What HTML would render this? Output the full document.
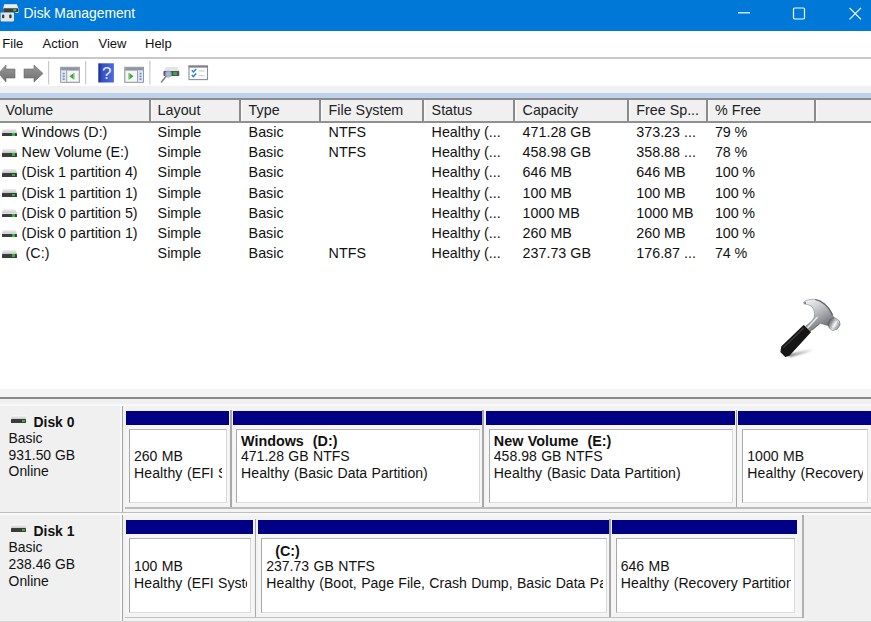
<!DOCTYPE html>
<html><head><meta charset="utf-8"><title>Disk Management</title>
<style>
html,body{margin:0;padding:0;}
body{width:871px;height:622px;overflow:hidden;background:#fff;position:relative;font-family:"Liberation Sans",Arial,sans-serif;color:#111;}
.abs{position:absolute;}
#title{left:0;top:0;width:871px;height:31px;background:#0078d7;}
#title .t{position:absolute;left:23.600px;top:4.900px;font-size:13.850px;color:#fff;line-height:16px;white-space:nowrap;}
#menu{left:0;top:31px;width:871px;height:26px;background:#fff;}
#menu span{position:absolute;top:5px;font-size:13px;line-height:16px;color:#111;}
#menuline{left:0;top:57.300px;width:871px;height:1.5px;background:#c8c8c8;}
#tool{left:0;top:59px;width:871px;height:26.500px;background:#fff;}
#gap1{left:0;top:85.500px;width:871px;height:8px;background:#f0f0f0;}
#gap2{left:0;top:93px;width:871px;height:5px;background:#bcd2ec;}
#hdr{left:0;top:97.600px;width:871px;height:25.200px;background:#f0f0f0;border-top:2px solid #8c8c8c;border-bottom:2px solid #909090;box-sizing:border-box;}
#hdr span{position:absolute;top:2.300px;margin-left:.6px;font-size:14.3px;line-height:17px;color:#222;white-space:nowrap;}
#hdr i{position:absolute;top:0;width:2px;height:21.500px;background:#8a8a8a;box-shadow:1.500px 0 0 #f8f8f8;}
.row{position:absolute;left:0;width:871px;height:20px;font-size:14.3px;line-height:20px;color:#111;white-space:nowrap;}
.row .pc{letter-spacing:-.1px;word-spacing:-.1px;}
.row span{position:absolute;top:-.6px;margin-left:.6px;}
.dk{position:absolute;left:1.800px;top:10.300px;width:15.200px;height:3.700px;background:#3c3c3c;border-radius:.6px;}
.dk:before{content:"";position:absolute;left:0;top:-4.300px;width:100%;height:4.300px;background:linear-gradient(#f0f0f0,#c2c2c2);clip-path:polygon(8% 0,92% 0,100% 100%,0 100%);}
.dk:after{content:"";position:absolute;left:10.200px;top:.5px;width:2.800px;height:2.600px;background:#2fc02f;border-radius:.5px;}
#split{left:0;top:389px;width:871px;height:8px;background:#f4f4f4;}
#splitline{left:0;top:396.800px;width:871px;height:2.200px;background:#8a8a8a;}
#bottom{left:0;top:398.5px;width:871px;height:224px;background:#f0f0f0;}

.dl{position:absolute;width:120px;font-size:13.900px;line-height:16.600px;color:#111;white-space:nowrap;}
.dl span{margin-left:8.600px;}
.dl b{margin-left:33.500px;position:relative;top:.3px;}
.dk2{position:absolute;left:11.100px;top:5.500px;width:15.400px;height:3.600px;background:#3c3c3c;border-radius:.6px;}
.dk2:before{content:"";position:absolute;left:0;top:-4.600px;width:100%;height:4.600px;background:linear-gradient(#fdfdfd,#cacaca);clip-path:polygon(7% 0,93% 0,100% 100%,0 100%);}
.dk2:after{content:"";position:absolute;left:10.600px;top:.5px;width:2.900px;height:2.600px;background:#2fc02f;border-radius:.5px;}
.part{position:absolute;background:#f6f6f6;font-size:14.050px;line-height:16.550px;color:#111;white-space:nowrap;overflow:hidden;}
.part .in{position:absolute;left:3.300px;right:1.900px;box-sizing:border-box;background:#fff;border-left:1.700px solid #a8a8a8;border-top:1.500px solid #b4b4b4;border-right:1px solid #d8d8d8;border-bottom:1px solid #dcdcdc;overflow:hidden;}
.part .tx{position:absolute;left:4px;top:2.300px;right:3.400px;overflow:hidden;word-spacing:.5px;}
.part .tx b{font-size:14.350px;position:relative;top:1.100px;}
.part .tx i.c{display:inline-block;width:9px;}
.part .tx i.g{display:inline-block;width:3.500px;}
.part .tx .h{letter-spacing:.12px;word-spacing:.6px;}
.bar{position:absolute;background:#000084;}
.vsep{position:absolute;width:1.900px;background:#a8a8a8;}
</style></head><body>
<div id="title" class="abs">
<svg class="abs" style="left:0;top:0" width="22" height="31" viewBox="0 0 22 31"><defs><linearGradient id="ig" x1="0" y1="0" x2="0" y2="1"><stop offset="0" stop-color="#f4f4f4"/><stop offset="1" stop-color="#d4d4d4"/></linearGradient></defs><path d="M4.200 4.300h12.600l1.700 4.200v4.600h-3v-1H3.200V8.300z" fill="url(#ig)"/><rect x="3.300" y="8.300" width="14.800" height="3.700" rx=".6" fill="#3c3c3c"/><rect x="13.200" y="9" width="3" height="2.200" rx=".5" fill="#2fc02f"/><rect x=".6" y="12.400" width="13.400" height="9" rx=".8" fill="#e4e4e4"/><rect x="2" y="14.500" width="2.300" height="3.800" rx="1" fill="#3a3a3a"/><rect x="9.200" y="14.500" width="2.400" height="3.800" rx="1" fill="#3a3a3a"/></svg>
<div class="t">Disk Management</div>
<svg class="abs" style="left:730px;top:0" width="141" height="31" viewBox="0 0 141 31"><g stroke="#fff" stroke-width="1.2" fill="none"><path d="M8 12.8h12"/><rect x="63.5" y="8" width="11" height="11" rx="1.2"/><path d="M119.5 7.8l11.5 11.5M131 7.8l-11.5 11.5"/></g></svg>
</div>
<div id="menu" class="abs"><span style="left:2.300px">File</span><span style="left:42.500px">Action</span><span style="left:98.500px">View</span><span style="left:145px">Help</span></div>
<div id="menuline" class="abs"></div>
<div id="tool" class="abs">
<svg class="abs" style="left:0;top:0" width="220" height="27" viewBox="0 59 220 27">
<defs><linearGradient id="hb" x1="0" y1="0" x2="1" y2="0"><stop offset="0" stop-color="#1a2c8c"/><stop offset=".25" stop-color="#3550c4"/><stop offset="1" stop-color="#4a6ce0"/></linearGradient>
<linearGradient id="ar" x1="0" y1="0" x2="0" y2="1"><stop offset="0" stop-color="#9a9a9a"/><stop offset="1" stop-color="#6e6e6e"/></linearGradient></defs>
<path d="M-1.500 73.400l7.500-8.400v4h9v9H6v4z" fill="url(#ar)" stroke="#6a6a6a" stroke-width=".6"/>
<path d="M43 73.400l-9-8.400v4H24v9h10v4z" fill="url(#ar)" stroke="#6a6a6a" stroke-width=".6"/>
<rect x="48.200" y="61" width="1" height="23.500" fill="#bdbdbd"/>
<rect x="85.200" y="61" width="1" height="23.500" fill="#bdbdbd"/>
<rect x="149.400" y="61" width="1" height="23.500" fill="#bdbdbd"/>
<g transform="translate(0 .8)"><rect x="60.700" y="66.500" width="18.600" height="15" fill="#f6f6f6" stroke="#8a8e94"/><rect x="61.200" y="67" width="17.600" height="2.800" fill="#8c96a4"/><rect x="61.200" y="69.800" width="5" height="11.200" fill="#dfe6f2"/><rect x="66.200" y="69.800" width="1" height="11.200" fill="#9a9ea4"/><path d="M69.500 75.500l4.200-3.200v6.400z" fill="#3aa83a"/><rect x="73.500" y="72.200" width="1" height="6.500" fill="#7cc87c"/><rect x="62.700" y="72" width="2" height="1.600" fill="#6a8fd0"/><rect x="62.700" y="74.800" width="2" height="1.600" fill="#6a8fd0"/><rect x="62.700" y="77.600" width="2" height="1.600" fill="#6a8fd0"/></g>
<g><rect x="98.300" y="63.300" width="15.600" height="19.200" fill="url(#hb)"/><text x="106.800" y="79" font-family="Liberation Sans, sans-serif" font-size="17" fill="#e8ecff" text-anchor="middle">?</text></g>
<g transform="translate(0 .8)"><rect x="124.800" y="66.500" width="18.600" height="15" fill="#f6f6f6" stroke="#8a8e94"/><rect x="125.300" y="67" width="17.600" height="2.800" fill="#8c96a4"/><rect x="138" y="69.800" width="5" height="11.200" fill="#dfe6f2"/><rect x="137" y="69.800" width="1" height="11.200" fill="#9a9ea4"/><path d="M133.500 75.500l-4.200-3.200v6.400z" fill="#3aa83a"/><rect x="128.300" y="72.200" width="1" height="6.500" fill="#7cc87c"/><rect x="139.500" y="72" width="2" height="1.600" fill="#6a8fd0"/><rect x="139.500" y="74.800" width="2" height="1.600" fill="#6a8fd0"/><rect x="139.500" y="77.600" width="2" height="1.600" fill="#6a8fd0"/></g>
<g><path d="M163.500 71.200l2.200-4.200h11.600l2 4.200z" fill="#e2e4e6"/><rect x="163.500" y="71" width="15.800" height="5" rx=".8" fill="#505458"/><rect x="173.300" y="72.100" width="3.600" height="2.800" fill="#2fb82f"/><circle cx="168.300" cy="74.100" r="3.100" fill="#b4d0ee" fill-opacity=".8" stroke="#8a98a8" stroke-width=".9"/><path d="M166 76.600l-4.600 5.400" stroke="#80848a" stroke-width="1.600" stroke-linecap="round"/></g>
<g><rect x="189" y="66" width="18.500" height="13.600" fill="#fdfdfd" stroke="#8a8e94" stroke-width="1.100"/><rect x="188.500" y="65.600" width="19.500" height="2" fill="#7c8088"/><path d="M191.800 70.300l1.600 1.700 2.800-3M191.800 74.900l1.600 1.700 2.800-3" stroke="#2a86e0" stroke-width="1.500" fill="none"/><rect x="198.800" y="70.300" width="5.800" height="1.200" fill="#ccd0d4"/><rect x="198.800" y="75" width="5.800" height="1.200" fill="#ccd0d4"/></g>
</svg>
</div>
<div id="gap1" class="abs"></div><div id="gap2" class="abs"></div>
<div id="hdr" class="abs">
<span style="left:5px">Volume</span><span style="left:157px">Layout</span><span style="left:248px">Type</span><span style="left:328px">File System</span><span style="left:431px">Status</span><span style="left:522px">Capacity</span><span style="left:635.700px">Free Sp...</span><span class="pc" style="left:714.400px">% Free</span>
<i style="left:149px"></i><i style="left:239px"></i><i style="left:319px"></i><i style="left:422px"></i><i style="left:513px"></i><i style="left:627px"></i><i style="left:706px"></i><i style="left:814px"></i>
</div>
<div id="rows" class="abs" style="left:0;top:0">
<div class="row" style="top:122.50px"><div class="dk"></div><span style="left:21px">Windows (D:)</span><span style="left:157px">Simple</span><span style="left:248px">Basic</span><span style="left:328px">NTFS</span><span style="left:431px">Healthy (...</span><span style="left:522px">471.28 GB</span><span style="left:635.700px">373.23 ...</span><span class="pc" style="left:714.400px">79 %</span></div>
<div class="row" style="top:142.70px"><div class="dk"></div><span style="left:21px">New Volume (E:)</span><span style="left:157px">Simple</span><span style="left:248px">Basic</span><span style="left:328px">NTFS</span><span style="left:431px">Healthy (...</span><span style="left:522px">458.98 GB</span><span style="left:635.700px">358.88 ...</span><span class="pc" style="left:714.400px">78 %</span></div>
<div class="row" style="top:162.90px"><div class="dk"></div><span style="left:21px">(Disk 1 partition 4)</span><span style="left:157px">Simple</span><span style="left:248px">Basic</span><span style="left:431px">Healthy (...</span><span style="left:522px">646 MB</span><span style="left:635.700px">646 MB</span><span class="pc" style="left:714.400px">100 %</span></div>
<div class="row" style="top:183.10px"><div class="dk"></div><span style="left:21px">(Disk 1 partition 1)</span><span style="left:157px">Simple</span><span style="left:248px">Basic</span><span style="left:431px">Healthy (...</span><span style="left:522px">100 MB</span><span style="left:635.700px">100 MB</span><span class="pc" style="left:714.400px">100 %</span></div>
<div class="row" style="top:203.30px"><div class="dk"></div><span style="left:21px">(Disk 0 partition 5)</span><span style="left:157px">Simple</span><span style="left:248px">Basic</span><span style="left:431px">Healthy (...</span><span style="left:522px">1000 MB</span><span style="left:635.700px">1000 MB</span><span class="pc" style="left:714.400px">100 %</span></div>
<div class="row" style="top:223.50px"><div class="dk"></div><span style="left:21px">(Disk 0 partition 1)</span><span style="left:157px">Simple</span><span style="left:248px">Basic</span><span style="left:431px">Healthy (...</span><span style="left:522px">260 MB</span><span style="left:635.700px">260 MB</span><span class="pc" style="left:714.400px">100 %</span></div>
<div class="row" style="top:243.70px"><div class="dk"></div><span style="left:25px">(C:)</span><span style="left:157px">Simple</span><span style="left:248px">Basic</span><span style="left:328px">NTFS</span><span style="left:431px">Healthy (...</span><span style="left:522px">237.73 GB</span><span style="left:635.700px">176.87 ...</span><span class="pc" style="left:714.400px">74 %</span></div>
</div>
<svg class="abs" style="left:760px;top:285px" width="100" height="85" viewBox="760 285 100 85"><defs>
<linearGradient id="hg" x1="0" y1="0" x2=".6" y2="1"><stop offset="0" stop-color="#fafafa"/><stop offset=".4" stop-color="#c8cbce"/><stop offset="1" stop-color="#66696e"/></linearGradient>
<linearGradient id="fg" x1="0" y1=".2" x2="1" y2=".8"><stop offset="0" stop-color="#3c4044"/><stop offset=".3" stop-color="#9a9ea2"/><stop offset=".55" stop-color="#f4f4f4"/><stop offset=".8" stop-color="#b0b4b8"/><stop offset="1" stop-color="#5a5e62"/></linearGradient>
<linearGradient id="sh" x1="0" y1="0" x2="1" y2="0"><stop offset="0" stop-color="#000" stop-opacity=".6"/><stop offset="1" stop-color="#000" stop-opacity="0"/></linearGradient>
<filter id="bl" x="-20%" y="-20%" width="140%" height="140%"><feGaussianBlur stdDeviation=".45"/></filter>
<filter id="bl2" x="-20%" y="-50%" width="140%" height="200%"><feGaussianBlur stdDeviation="1"/></filter></defs>
<path d="M788.0 354.4L812.6 348.9L814.0 350.8L789.8 357.1z" fill="url(#sh)" filter="url(#bl2)"/>
<g filter="url(#bl)">
<path d="M803.4 302.5L805.8 300.7L809.9 299.5L814.6 299.2L820.1 300.8L824.9 304.1L829.0 308.5L831.7 313.0L832.7 315.3L834.5 318.6L829.0 326.0L825.6 324.9L820.1 323.3L816.7 326.0L810.5 331.2L805.8 326.0L811.9 320.8L814.1 317.5L814.6 313.7L813.8 309.6L811.4 306.2L807.5 304.5L804.4 304.1z" fill="url(#hg)" stroke="#6a6e72" stroke-width=".5" stroke-linejoin="round"/>
<path d="M815.3 299.5L820.1 301.1L824.9 304.4L829.0 308.8L831.6 313.1L832.5 315.3" stroke="#4c5054" stroke-width="1.300" fill="none" opacity=".75" stroke-linejoin="round"/>
<path d="M807.8 327.6L817.1 317.5" stroke="#fff" stroke-width="1.400" fill="none" opacity=".85" stroke-linecap="round"/>
<path d="M811.9 330.1L819.6 323.8" stroke="#55585c" stroke-width=".9" fill="none" opacity=".8"/>
<path d="M830.2 319.2L834.9 317.8L839.2 320.8L840.1 324.9L837.3 329.0L832.7 330.6L829.1 327.9L828.0 323.5z" fill="url(#fg)" stroke="#5c6064" stroke-width=".6" stroke-linejoin="round"/>
<path d="M832.4 320.8L836.5 320.0L838.4 324.6L836.0 327.9L832.4 328.4L830.5 324.9z" fill="none" stroke="#8a8e92" stroke-width=".5" opacity=".8"/>
<path d="M781.9 346.7L803.7 325.7L810.3 332.1L789.2 355.2L785.4 356.3L781.0 351.9z" fill="#161616" stroke="#161616" stroke-width="1.200" stroke-linejoin="round"/>
<path d="M783.5 347.6L803.4 328.2" stroke="#505050" stroke-width="1.200" stroke-linecap="round" fill="none" opacity=".7"/>
<circle cx="805.1" cy="302.9" r=".9" fill="#555"/>
</g></svg>
<div id="split" class="abs"></div><div id="splitline" class="abs"></div>
<div id="bottom" class="abs"></div>
<div class="abs" style="left:0;top:404.300px;width:871px;height:1.500px;background:#f8f8f8"></div>
<div class="abs" style="left:123.500px;top:405.500px;width:750px;height:216px;background:#f3f3f3"></div>
<div class="abs" style="left:803.500px;top:514px;width:70px;height:108px;background:#f0f0f0"></div>
<div class="abs" style="left:120.200px;top:405.500px;width:1.500px;height:216px;background:#f8f8f8"></div>
<div class="abs" style="left:121.700px;top:405.500px;width:1.800px;height:107px;background:#a4a4a4"></div>
<div class="abs" style="left:121.700px;top:515.300px;width:1.800px;height:107px;background:#a4a4a4"></div>
<div class="abs" style="left:125px;top:507px;width:746px;height:1.500px;background:#bcbcbc"></div>
<div class="abs" style="left:0;top:511.700px;width:871px;height:1.600px;background:#bebebe"></div>
<div class="abs" style="left:0;top:513.300px;width:871px;height:1.300px;background:#f9f9f9"></div>
<div class="abs" style="left:125px;top:616.500px;width:677px;height:1.500px;background:#c0c0c0"></div>
<div class="abs" style="left:0;top:621.200px;width:871px;height:1px;background:#d4d4d4"></div>
<div class="abs" style="left:802.400px;top:514.500px;width:1.600px;height:103px;background:#b0b0b0"></div>
<div class="dl" style="left:0;top:413.600px"><div class="dk2"></div><b>Disk 0</b><br><span>Basic</span><br><span>931.50 GB</span><br><span>Online</span></div>
<div class="dl" style="left:0;top:522.900px"><div class="dk2"></div><b>Disk 1</b><br><span>Basic</span><br><span>238.46 GB</span><br><span>Online</span></div>
<div class="bar" style="left:125.7px;top:410.9px;width:103.0px;height:14.300px"></div>
<div class="part" style="left:125.7px;top:425.0px;width:103.0px;height:79.8px"><div class="in" style="top:4.0px;height:74.3px"><div class="tx" style="top:1.9px"><br>260 MB<br><span class="h">Healthy </span>(EFI System Partition)</div></div></div>
<div class="bar" style="left:232.7px;top:410.9px;width:249.1px;height:14.300px"></div>
<div class="part" style="left:232.7px;top:425.0px;width:249.1px;height:79.8px"><div class="in" style="top:4.0px;height:74.3px"><div class="tx" style="top:1.9px"><b>Windows&nbsp; (D:)</b><br>471.28 GB NTFS<br><span class="h">Healthy </span>(Basic Data Partition)</div></div></div>
<div class="bar" style="left:485.5px;top:410.9px;width:249.5px;height:14.300px"></div>
<div class="part" style="left:485.5px;top:425.0px;width:249.5px;height:79.8px"><div class="in" style="top:4.0px;height:74.3px"><div class="tx" style="top:1.9px"><b>New Volume&nbsp; (E:)</b><br>458.98 GB NTFS<br><span class="h">Healthy </span>(Basic Data Partition)</div></div></div>
<div class="bar" style="left:738.4px;top:410.9px;width:134.0px;height:14.300px"></div>
<div class="part" style="left:738.4px;top:425.0px;width:131.2px;height:79.8px"><div class="in" style="left:3.9px;top:4.0px;height:74.3px"><div class="tx" style="top:1.9px"><br>1000 MB<br><span class="h">Healthy </span>(Recovery Partition)</div></div></div>
<div class="vsep" style="left:230px;top:409.59999999999997px;height:97.9px"></div>
<div class="vsep" style="left:482.4px;top:409.59999999999997px;height:97.9px"></div>
<div class="vsep" style="left:735.5px;top:409.59999999999997px;height:97.9px"></div>
<div class="bar" style="left:125.7px;top:520.0px;width:127.5px;height:14.300px"></div>
<div class="part" style="left:125.7px;top:534.1px;width:127.5px;height:80.0px"><div class="in" style="top:4.1px;height:74.4px"><div class="tx" style="top:2.3px"><br>100 MB<br><span class="h">Healthy </span>(EFI System Partition)</div></div></div>
<div class="bar" style="left:257.9px;top:520.0px;width:350.9px;height:14.300px"></div>
<div class="part" style="left:257.9px;top:534.1px;width:350.9px;height:80.0px"><div class="in" style="top:4.1px;height:74.4px"><div class="tx" style="top:2.3px"><b><i class="c"></i>(C:)</b><br>237.73 GB NTFS<br><span class="h">Healthy </span>(Boot, Page File, Crash Dump, Basic Data Partition)</div></div></div>
<div class="bar" style="left:612.4px;top:520.0px;width:184.6px;height:14.300px"></div>
<div class="part" style="left:612.4px;top:534.1px;width:184.6px;height:80.0px"><div class="in" style="top:4.1px;height:74.4px"><div class="tx" style="top:2.3px"><br>646 MB<br><span class="h">Healthy </span>(Recovery Partition)</div></div></div>
<div class="vsep" style="left:254.5px;top:518.7px;height:98.3px"></div>
<div class="vsep" style="left:609.4px;top:518.7px;height:98.3px"></div>
</body></html>
